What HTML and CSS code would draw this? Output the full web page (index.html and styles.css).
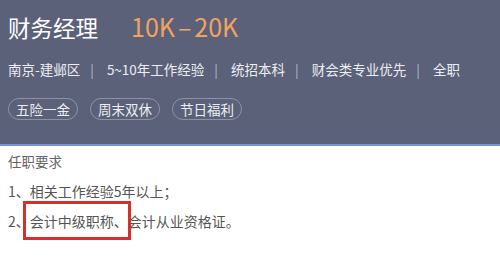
FILE: index.html
```html
<!DOCTYPE html>
<html lang="zh-CN">
<head>
  <meta charset="UTF-8">
  <title>财务经理</title>
  <link rel="stylesheet" href="styles.css">
</head>
<body>
  <div class="job-head">
    <div class="title-row">
      <span class="job-name">财务经理</span>
      <span class="salary">10K<span class="dash">–</span>20K</span>
    </div>
    <div class="info-row">
      <span>南京-建邺区</span><span class="sep">|</span>
      <span>5~10年工作经验</span><span class="sep">|</span>
      <span>统招本科</span><span class="sep">|</span>
      <span>财会类专业优先</span><span class="sep">|</span>
      <span>全职</span>
    </div>
    <div class="tags">
      <span class="tag">五险一金</span>
      <span class="tag">周末双休</span>
      <span class="tag">节日福利</span>
    </div>
  </div>

  <div class="job-body">
    <p class="req-title">任职要求</p>
    <p>1、相关工作经验5年以上；</p>
    <p>2、<span class="mark">会计中级职称、</span>会计从业资格证。</p>
  </div>
</body>
</html>
```

FILE: styles.css
```css
html, body {
  margin: 0;
  padding: 0;
  background: #fff;
  font-family: "Noto Sans CJK SC", "Noto Sans", sans-serif;
}

.job-head {
  height: 146px;
  box-sizing: border-box;
  padding: 11px 8px 0;
  background: #5b6178;
  border-bottom: 2px solid #7d92d4;
  color: #eceef3;
}

.title-row {
  display: flex;
  align-items: baseline;
  height: 30px;
  line-height: 30px;
}

.job-name {
  font-size: 22.5px;
  color: #fff;
}

.salary {
  margin-left: 33px;
  font-size: 25px;
  color: #f3a35f;
}

.dash {
  margin: 0 3px;
}

.info-row {
  margin-top: 18px;
  font-size: 13.5px;
  line-height: 20px;
  white-space: nowrap;
}

.sep {
  margin: 0 10px;
  color: #b4b8c6;
}

.tags {
  display: flex;
  gap: 12px;
  margin-top: 19px;
}

.tag {
  height: 22px;
  line-height: 20px;
  box-sizing: border-box;
  padding: 0 7px;
  border: 1px solid #8d92a5;
  border-radius: 11px;
  font-size: 13.5px;
}

.job-body {
  padding: 0 8px 20px;
  color: #555;
  font-size: 14px;
  line-height: 30px;
}

.job-body p {
  margin: 0;
}

.req-title {
  font-size: 13.5px;
  color: #666;
}

.mark {
  position: relative;
}

.mark::after {
  content: "";
  position: absolute;
  left: -7px;
  right: -3px;
  top: -10px;
  height: 39px;
  box-sizing: border-box;
  border: 3px solid #d6302d;
}
```
